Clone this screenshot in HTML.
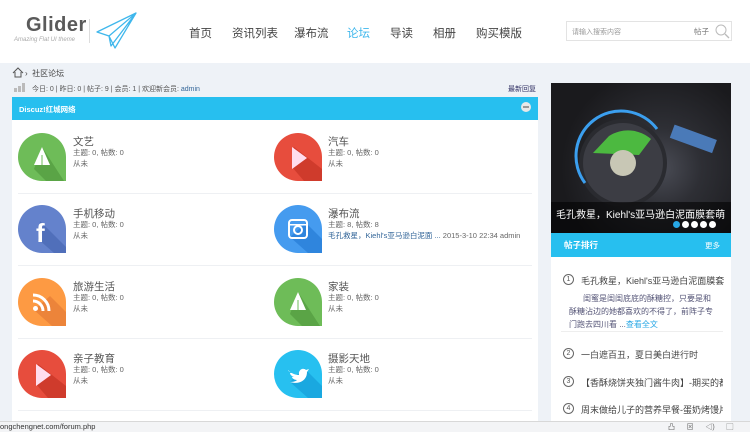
<!DOCTYPE html>
<html><head><meta charset="utf-8"><style>
*{margin:0;padding:0;box-sizing:border-box}
body{width:750px;height:432px;overflow:hidden;background:#eef2f7;font-family:"Liberation Sans","Noto Sans CJK SC",sans-serif;color:#555;position:relative}
.abs{position:absolute}
.hdr{left:0;top:0;width:750px;height:63px;background:#fff}
.nav span{position:absolute;top:25px;font-size:11.5px;color:#444}
.main{left:12px;top:97px;width:526px;height:330px;background:#fff}
.bar{left:12px;top:97px;width:526px;height:23px;background:#27bfef}
.ic{position:absolute;width:48px;height:48px;border-radius:24px 24px 0 24px;overflow:hidden}
.ic svg{position:absolute;left:0;top:0}
.t{position:absolute;font-size:10.5px;color:#555}
.s{position:absolute;font-size:7.5px;color:#666;line-height:10px}
.sep{position:absolute;left:18px;width:514px;height:1px;background:#eef0f3}
.rk{position:absolute;left:565px;font-size:9px;color:#444}
.num{position:absolute;left:563px;width:11px;height:11px;border:1px solid #666;border-radius:50%;font-size:7px;text-align:center;line-height:9px;color:#555}
</style></head><body>
<div class="abs hdr"></div>
<div class="abs" style="left:26px;top:14px;font-size:20px;font-weight:bold;color:#5a5a5a;letter-spacing:0.5px">Glider</div>
<div class="abs" style="left:14px;top:37px;font-size:6px;font-style:italic;color:#aaa">Amazing Flat UI theme</div>
<div class="abs" style="left:89px;top:19px;width:1px;height:24px;background:#ddd"></div>
<svg class="abs" style="left:95px;top:12px" width="45" height="38" viewBox="0 0 45 38"><path d="M41 1 L2 20 L14 24 L41 1 L20 36 L14 24 M41 1 L16 34 L14 24" fill="none" stroke="#3fb7ec" stroke-width="1.3" stroke-linejoin="round"/></svg>
<div class="nav">
<span style="left:189px">首页</span><span style="left:232px">资讯列表</span><span style="left:294px">瀑布流</span><span style="left:347px;color:#3fb7ec">论坛</span><span style="left:390px">导读</span><span style="left:433px">相册</span><span style="left:476px">购买模版</span></div>
<div class="abs" style="left:566px;top:21px;width:166px;height:20px;border:1px solid #e3e3e3;background:#fff"></div>
<div class="abs" style="left:572px;top:27px;font-size:7px;color:#999">请输入搜索内容</div>
<div class="abs" style="left:694px;top:26px;font-size:7.5px;color:#777">帖子</div>
<svg class="abs" style="left:714px;top:23px" width="16" height="16"><circle cx="7" cy="7" r="5" fill="none" stroke="#bbb" stroke-width="1"/><path d="M11 11 L15 15" stroke="#bbb" stroke-width="1.3"/></svg>
<svg class="abs" style="left:12px;top:67px" width="12" height="11"><path d="M1 6 L6 1 L11 6 M3 5 V10 H9 V5" fill="none" stroke="#555" stroke-width="1"/></svg>
<div class="abs" style="left:25px;top:68px;font-size:8px;color:#444">›&nbsp; 社区论坛</div>
<svg class="abs" style="left:14px;top:82px" width="13" height="10"><rect x="0" y="6" width="3" height="4" fill="#bbb"/><rect x="4" y="4" width="3" height="6" fill="#bbb"/><rect x="8" y="1" width="3" height="9" fill="#bbb"/></svg>
<div class="abs" style="left:32px;top:84px;font-size:7px;color:#555">今日: 0 | 昨日: 0 | 帖子: 9 | 会员: 1 | 欢迎新会员: <span style="color:#369">admin</span></div>
<div class="abs" style="left:508px;top:84px;font-size:7px;color:#336">最新回复</div>
<div class="abs main"></div>
<div class="abs bar"></div>
<div class="abs" style="left:19px;top:104px;font-size:7.5px;font-weight:bold;color:#fff">Discuz!红城网络</div>
<div class="abs" style="left:521px;top:102px;width:10px;height:10px;border-radius:50%;background:#e8e8e8"><div style="position:absolute;left:2px;top:4px;width:6px;height:2px;background:#999"></div></div>

<div class="ic" style="left:18px;top:133px;background:#6ebc58"><svg width="48" height="48"><path d="M24 14 L46 48 H28 L16 36Z" fill="#5aa446"/><path d="M24 14 L32 32 H16Z" fill="#fff"/><path d="M24 22 V32" stroke="#6ebc58" stroke-width="1"/></svg></div>
<div class="t" style="left:73px;top:134px">文艺</div><div class="s" style="left:73px;top:148px">主题: 0, 帖数: 0</div><div class="s" style="left:73px;top:159px">从未</div>
<div class="ic" style="left:274px;top:133px;background:#e74d3d"><svg width="48" height="48"><path d="M20 14 L48 36 V48 H30 L18 34Z" fill="#cf3b2c"/><path d="M18 14 L33 25 L18 36Z" fill="#fde"/></svg></div>
<div class="t" style="left:328px;top:134px">汽车</div><div class="s" style="left:328px;top:148px">主题: 0, 帖数: 0</div><div class="s" style="left:328px;top:159px">从未</div>
<div class="sep" style="top:193px"></div>
<div class="ic" style="left:18px;top:205px;background:#6482cc"><svg width="48" height="48"><path d="M22 16 L48 42 V48 H36 L20 34Z" fill="#506fba"/><text x="18" y="37" font-size="26" font-weight="bold" fill="#fff" font-family="Liberation Sans">f</text></svg></div>
<div class="t" style="left:73px;top:206px">手机移动</div><div class="s" style="left:73px;top:220px">主题: 0, 帖数: 0</div><div class="s" style="left:73px;top:231px">从未</div>
<div class="ic" style="left:274px;top:205px;background:#459bef"><svg width="48" height="48"><path d="M32 18 L48 34 V48 H34 L16 32Z" fill="#2f85dd"/><rect x="15" y="15" width="18" height="18" rx="3" fill="none" stroke="#fff" stroke-width="2"/><circle cx="24" cy="25" r="4" fill="none" stroke="#fff" stroke-width="2"/><rect x="15" y="19" width="18" height="1.5" fill="#fff"/></svg></div>
<div class="t" style="left:328px;top:206px">瀑布流</div><div class="s" style="left:328px;top:220px">主题: 8, 帖数: 8</div><div class="s" style="left:328px;top:231px"><span style="color:#369">毛孔救星，Kiehl's亚马逊白泥面 ...</span> 2015-3-10 22:34 admin</div>
<div class="sep" style="top:265px"></div>
<div class="ic" style="left:18px;top:278px;background:#fd9a43"><svg width="48" height="48"><path d="M32 18 L48 34 V48 H34 L16 32Z" fill="#ec843a"/><circle cx="17.5" cy="30.5" r="2.5" fill="#fff"/><path d="M15 23 A10 10 0 0 1 25 33 M15 17 A16 16 0 0 1 31 33" fill="none" stroke="#fff" stroke-width="3"/></svg></div>
<div class="t" style="left:73px;top:279px">旅游生活</div><div class="s" style="left:73px;top:293px">主题: 0, 帖数: 0</div><div class="s" style="left:73px;top:304px">从未</div>
<div class="ic" style="left:274px;top:278px;background:#6ebc58"><svg width="48" height="48"><path d="M24 14 L46 48 H28 L16 36Z" fill="#5aa446"/><path d="M24 14 L32 32 H16Z" fill="#fff"/><path d="M24 22 V32" stroke="#6ebc58" stroke-width="1"/></svg></div>
<div class="t" style="left:328px;top:279px">家装</div><div class="s" style="left:328px;top:293px">主题: 0, 帖数: 0</div><div class="s" style="left:328px;top:304px">从未</div>
<div class="sep" style="top:338px"></div>
<div class="ic" style="left:18px;top:350px;background:#e74d3d"><svg width="48" height="48"><path d="M20 14 L48 36 V48 H30 L18 34Z" fill="#cf3b2c"/><path d="M18 14 L33 25 L18 36Z" fill="#fde"/></svg></div>
<div class="t" style="left:73px;top:351px">亲子教育</div><div class="s" style="left:73px;top:365px">主题: 0, 帖数: 0</div><div class="s" style="left:73px;top:376px">从未</div>
<div class="ic" style="left:274px;top:350px;background:#27c0f0"><svg width="48" height="48"><path d="M30 18 L48 36 V48 H34 L16 32Z" fill="#1aa8e0"/><path d="M14 20 C18 24 22 25 25 25 C24 20 29 17 32 20 L35 19 L33 22 C33 30 26 35 16 32 C20 32 22 31 23 30 C20 30 18 28 18 27 L20 27 C17 26 16 24 16 23 L18 23 C16 22 14 21 14 20Z" fill="#fff"/></svg></div>
<div class="t" style="left:328px;top:351px">摄影天地</div><div class="s" style="left:328px;top:365px">主题: 0, 帖数: 0</div><div class="s" style="left:328px;top:376px">从未</div>
<div class="sep" style="top:410px"></div>

<div class="abs" style="left:551px;top:83px;width:180px;height:150px;background:radial-gradient(circle at 110px 85px,#4a4c55 0,#2e2f35 40px,#1a1a1d 100px)"></div>
<svg class="abs" style="left:551px;top:83px" width="180" height="150"><circle cx="72" cy="80" r="42" fill="#3c3d44" stroke="#2a2b30" stroke-width="4"/><path d="M34 100 A44 44 0 0 1 106 46" fill="none" stroke="#3b9fef" stroke-width="3"/><path d="M42 70 L58 53 A35 35 0 0 1 100 56 L88 72Z" fill="#4cb940"/><circle cx="72" cy="80" r="13" fill="#c8c7b5"/><rect x="120" y="48" width="45" height="14" fill="#4a7ab8" transform="rotate(20 140 55)"/></svg>
<div class="abs" style="left:551px;top:202px;width:180px;height:31px;background:rgba(0,0,0,.55)"></div>
<div class="abs" style="left:556px;top:206px;font-size:10px;color:#fff;white-space:nowrap">毛孔救星，Kiehl's亚马逊白泥面膜套萌</div>
<div class="abs" style="left:673px;top:221px;width:7px;height:7px;border-radius:50%;background:#27a7e5"></div>
<div class="abs" style="left:682px;top:221px;width:7px;height:7px;border-radius:50%;background:#fff"></div>
<div class="abs" style="left:691px;top:221px;width:7px;height:7px;border-radius:50%;background:#fff"></div>
<div class="abs" style="left:700px;top:221px;width:7px;height:7px;border-radius:50%;background:#fff"></div>
<div class="abs" style="left:709px;top:221px;width:7px;height:7px;border-radius:50%;background:#fff"></div>
<div class="abs" style="left:551px;top:233px;width:180px;height:24px;background:#27bfef"></div>
<div class="abs" style="left:564px;top:239px;font-size:8.5px;font-weight:bold;color:#fff">帖子排行</div>
<div class="abs" style="left:705px;top:240px;font-size:7.5px;color:#fff">更多</div>
<div class="abs" style="left:551px;top:257px;width:180px;height:164px;background:#fff"></div>
<div class="num" style="top:274px">1</div><div class="rk" style="left:581px;top:274px;white-space:nowrap;width:144px;overflow:hidden">毛孔救星，Kiehl's亚马逊白泥面膜套</div>
<div class="abs" style="left:569px;top:292px;width:148px;font-size:8px;line-height:13px;color:#777;text-indent:14px;height:40px;overflow:hidden"><span style="color:#557">闺蜜是闺闺底底的酥糖控，只要是和酥糖沾边的她都喜欢的不得了，前阵子专门跑去四川看 ...</span><span style="color:#27a7e5">查看全文</span></div>
<div class="abs" style="left:561px;top:331px;width:162px;height:1px;background:#eee"></div>
<div class="num" style="top:348px">2</div><div class="rk" style="left:581px;top:348px">一白遮百丑，夏日美白进行时</div>
<div class="num" style="top:376px">3</div><div class="rk" style="left:581px;top:376px;white-space:nowrap;width:142px;overflow:hidden">【香酥烧饼夹独门酱牛肉】-期买的都</div>
<div class="num" style="top:403px">4</div><div class="rk" style="left:581px;top:403px;white-space:nowrap;width:142px;overflow:hidden">周末做给儿子的营养早餐-蛋奶烤馒片</div>
<div class="abs" style="left:0;top:421px;width:750px;height:11px;background:#f3f4f6;border-top:1px solid #d8d8d8"></div>
<div class="abs" style="left:0;top:422px;font-size:7.5px;color:#333">ongchengnet.com/forum.php</div>
<div class="abs" style="left:668px;top:422px;font-size:7px;color:#666">凸&nbsp;&nbsp;&nbsp;&nbsp;&nbsp;&nbsp;⊠&nbsp;&nbsp;&nbsp;&nbsp;&nbsp;&nbsp;◁)&nbsp;&nbsp;&nbsp;&nbsp;&nbsp;&nbsp;▢</div>
</body></html>
